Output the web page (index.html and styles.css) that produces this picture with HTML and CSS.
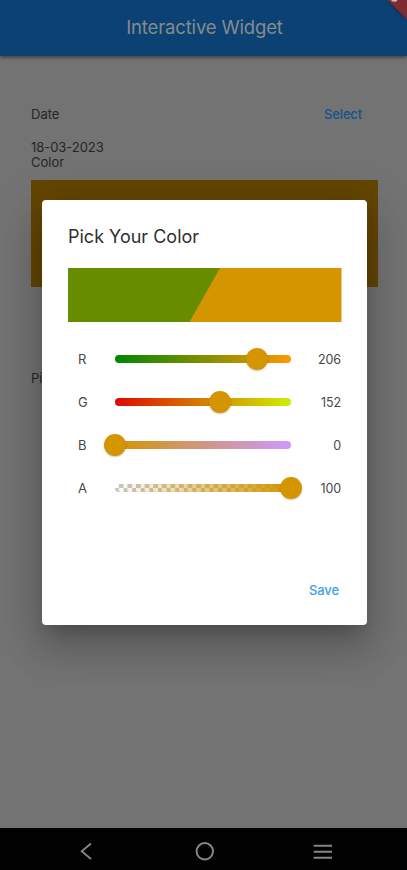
FILE: index.html
```html
<!DOCTYPE html>
<html lang="en">
<head>
<meta charset="utf-8">
<title>Interactive Widget</title>
<link rel="stylesheet" href="styles.css">
</head>
<body>
<div class="screen">
  <header class="appbar">
    <h1>Interactive Widget</h1>
    <svg class="ribbon" width="24" height="24" viewBox="0 0 24 24"><path d="M2.5 -2L24 19.5V-2Z" fill="#7d2b2e"/><path d="M8.6 -1C8.6 1.8 14.2 2 14 -1.2M9 0H13.5" fill="none" stroke="#c5b5b7" stroke-width="1.4"/></svg>
  </header>
  <main class="content">
    <div class="row"><span>Date</span><span class="link">Select</span></div>
    <div class="date">18-03-2023</div>
    <div class="label">Color</div>
    <div class="swatch"></div>
    <div class="pick">Pi</div>
  </main>
  <nav class="navbar">
    <svg width="407" height="42" viewBox="0 0 407 42" fill="none" stroke="#858585" stroke-width="1.9"><path d="M91 15.5L81.7 23.3L91 31.1"/><circle cx="204.8" cy="23.3" r="8.2" stroke-width="2"/><path d="M313.7 17.8H332M313.7 23.8H332M313.7 29.7H332" stroke-width="2.1"/></svg>
  </nav>
</div>
<div class="overlay">
  <section class="dialog">
    <h2>Pick Your Color</h2>
    <svg class="preview" width="273.5" height="54" viewBox="0 0 273.5 54"><path d="M0 0H273.5V54H0Z" fill="#d49500"/><path d="M0 0H152L121.5 54H0Z" fill="#688c00"/></svg>
    <div class="slider"><span class="name">R</span><div class="track red"><i class="thumb" style="left:80.8%"></i></div><span class="value">206</span></div>
    <div class="slider"><span class="name">G</span><div class="track green"><i class="thumb" style="left:59.8%"></i></div><span class="value">152</span></div>
    <div class="slider"><span class="name">B</span><div class="track blue"><i class="thumb" style="left:0%"></i></div><span class="value">0</span></div>
    <div class="slider"><span class="name">A</span><div class="track alpha"><i class="thumb" style="left:100%"></i></div><span class="value">100</span></div>
    <div class="save">Save</div>
  </section>
</div>
</body>
</html>
```
FILE: styles.css
```css
* { box-sizing: border-box; }
body { margin: 0; font: 13px/15px Inter, sans-serif; color: #262626; }
.screen { height: 870px; background: #737373; display: flex; flex-direction: column; overflow: hidden; }
.appbar { position: relative; height: 56px; flex: none; background: #0b4273; box-shadow: 0 1px 4px rgba(0,0,0,.55); display: flex; justify-content: center; }
.appbar h1 { margin: 15px 0 0; padding-left: 2px; font-size: 18.5px; line-height: 24px; font-weight: 400; color: #858b91; letter-spacing: -.15px; }
.ribbon { position: absolute; right: 0; top: 0; filter: drop-shadow(0 0 2px rgba(0,0,0,.4)); }
.content { flex: 1; padding: 51px 29px 0 31px; }
.row { display: flex; justify-content: space-between; padding-right: 16px; }
.link { color: #12548c; font-weight: 500; letter-spacing: -.15px; }
.date { margin-top: 18px; letter-spacing: -.05px; }
.label { margin-top: 0; }
.swatch { margin-top: 10px; height: 107px; background: #644600; }
.pick { margin-top: 84px; }
.navbar { height: 42px; background: #020202; flex: none; }
.navbar svg { display: block; }
.overlay { position: absolute; left: 0; top: 0; width: 407px; height: 870px; padding: 200px 40px 0 42px; overflow: hidden; }
.dialog { height: 425px; background: #fff; border-radius: 4px; padding: 25px 26px 0; box-shadow: 0 11px 15px -7px rgba(0,0,0,.2), 0 24px 38px 3px rgba(0,0,0,.14), 0 9px 46px 8px rgba(0,0,0,.12); }
.dialog h2 { margin: 0; font-size: 18px; line-height: 24px; font-weight: 400; color: #303030; }
.preview { display: block; margin: 19px 0 16px; }
.slider { display: flex; align-items: center; height: 42.8px; color: #484848; }
.name { width: 47px; padding: 1px 0 0 10px; }
.track { position: relative; width: 175.5px; height: 8px; border-radius: 4px; }
.red { background: linear-gradient(90deg, #008600, #ff9800); }
.green { background: linear-gradient(90deg, #df0800, #d49500 60%, #ceef00); }
.blue { background: linear-gradient(90deg, #d49500, #cc99ff); }
.alpha { background: linear-gradient(90deg, rgba(212,149,0,0), #d49500), repeating-conic-gradient(#c6c6c6 0 25%, #fff 0 50%) 0 0 / 8.6px 8px; }
.thumb { position: absolute; top: 4px; width: 22px; height: 22px; margin: -11px 0 0 -11px; border-radius: 50%; background: #d49500; box-shadow: 0 1px 2px rgba(0,0,0,.22); }
.value { flex: 1; padding-top: 1px; text-align: right; font-size: 12.5px; letter-spacing: -.1px; }
.save { margin-top: 74px; padding-right: 2px; text-align: right; color: #3d9fe5; font-weight: 500; letter-spacing: -.1px; }
```
